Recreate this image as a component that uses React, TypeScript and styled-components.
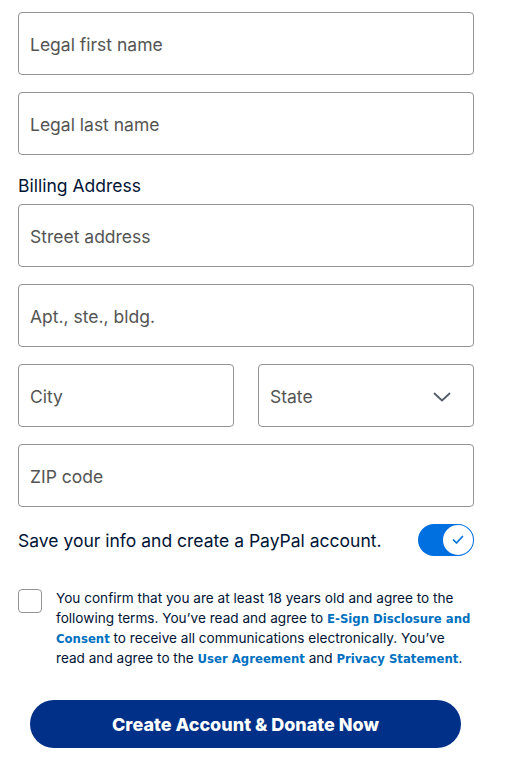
import styled, { createGlobalStyle } from "styled-components";

const GlobalStyle = createGlobalStyle`
  html, body {
    margin: 0;
    padding: 0;
    background: #ffffff;
  }
  body {
    font-family: "Inter", "Liberation Sans", sans-serif;
    color: #001435;
  }
`;

export default function App() {
  return (
    <>
      <GlobalStyle />
      <Page>
        <Field placeholder="Legal first name" />
        <Field placeholder="Legal last name" />
        <SectionTitle>Billing Address</SectionTitle>
        <FieldGroup>
          <Field placeholder="Street address" />
          <Field placeholder="Apt., ste., bldg." />
          <Row>
            <Field placeholder="City" />
            <SelectBox>
              <span>State</span>
              <svg width="18" height="10" viewBox="0 0 18 10">
                <path
                  d="M1.5 1.5 L9 8.5 L16.5 1.5"
                  fill="none"
                  stroke="#545d68"
                  strokeWidth="1.8"
                  strokeLinecap="round"
                  strokeLinejoin="round"
                />
              </svg>
            </SelectBox>
          </Row>
          <Field placeholder="ZIP code" />
        </FieldGroup>
        <ToggleRow>
          <ToggleLabel>Save your info and create a PayPal account.</ToggleLabel>
          <Toggle>
            <Knob>
              <svg width="12" height="10" viewBox="0 0 12 10">
                <path
                  d="M1.5 5 L4.5 8 L10.5 1.5"
                  fill="none"
                  stroke="#0070e0"
                  strokeWidth="1.7"
                  strokeLinecap="round"
                  strokeLinejoin="round"
                />
              </svg>
            </Knob>
          </Toggle>
        </ToggleRow>
        <Consent>
          <CheckBox />
          <ConsentText>
            You confirm that you are at least 18 years old and agree to the
            following terms. You’ve read and agree to{" "}
            <Link>E-Sign Disclosure and Consent</Link> to receive all
            communications electronically. You’ve read and agree to the{" "}
            <Link>User Agreement</Link> and <Link>Privacy Statement</Link>.
          </ConsentText>
        </Consent>
        <SubmitButton>Create Account &amp; Donate Now</SubmitButton>
      </Page>
    </>
  );
}

const Page = styled.div`
  width: 456px;
  padding: 12px 0 0 18px;
  display: flex;
  flex-direction: column;
  gap: 17px;
`;

const FieldGroup = styled.div`
  display: flex;
  flex-direction: column;
  gap: 17px;
  margin-top: -11px;
`;

const Field = styled.input`
  box-sizing: border-box;
  width: 100%;
  height: 63px;
  padding: 2px 11px 0;
  border: 1px solid #929496;
  border-radius: 4px;
  background: #ffffff;
  font-family: "Inter", "Liberation Sans", sans-serif;
  font-size: 17.5px;
  color: #001435;
  outline: none;

  &::placeholder {
    color: #545454;
  }
`;

const SectionTitle = styled.div`
  font-size: 17.5px;
  line-height: 24px;
  color: #001435;
  margin-top: 2px;
`;

const Row = styled.div`
  display: grid;
  grid-template-columns: 216px 216px;
  justify-content: space-between;
`;

const SelectBox = styled.div`
  box-sizing: border-box;
  height: 63px;
  padding: 2px 22px 0 11px;
  border: 1px solid #929496;
  border-radius: 4px;
  display: flex;
  align-items: center;
  justify-content: space-between;
  font-size: 17.5px;
  color: #545454;
`;

const ToggleRow = styled.div`
  display: flex;
  align-items: center;
  justify-content: space-between;
`;

const ToggleLabel = styled.div`
  font-size: 17.5px;
  color: #001435;
`;

const Toggle = styled.div`
  box-sizing: border-box;
  width: 56px;
  height: 32px;
  border-radius: 16px;
  background: #0070e0;
  padding: 1px;
  display: flex;
  justify-content: flex-end;
`;

const Knob = styled.div`
  box-sizing: border-box;
  width: 30px;
  height: 30px;
  border-radius: 50%;
  background: #ffffff;
  display: flex;
  align-items: center;
  justify-content: center;
`;

const Consent = styled.div`
  display: flex;
  gap: 14px;
  margin-top: 16px;
`;

const CheckBox = styled.div`
  box-sizing: border-box;
  flex: none;
  width: 24px;
  height: 24px;
  border: 1px solid #929496;
  border-radius: 4px;
`;

const ConsentText = styled.p`
  margin: -1px 0 0;
  font-size: 13.6px;
  line-height: 20px;
  color: #001435;
`;

const Link = styled.a`
  font-family: "DejaVu Sans", sans-serif;
  font-weight: bold;
  font-size: 11.7px;
  line-height: 1;
  color: #0070c0;
`;

const SubmitButton = styled.button`
  align-self: flex-start;
  margin: 15px 0 0 12px;
  width: 431px;
  height: 48px;
  border: none;
  border-radius: 24px;
  background: #003087;
  color: #ffffff;
  font-family: "Inter", "Liberation Sans", sans-serif;
  font-weight: 800;
  font-size: 18px;
`;
